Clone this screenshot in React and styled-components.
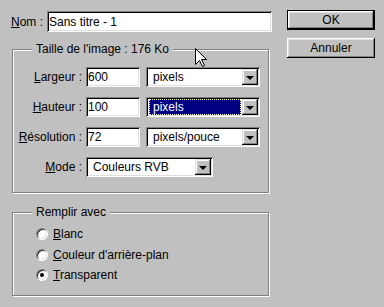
import React from "react";
import styled, { createGlobalStyle } from "styled-components";

const GlobalStyle = createGlobalStyle`
  html, body { margin: 0; padding: 0; background: #c0c0c0; }
  body {
    font-family: "Liberation Sans", Arial, sans-serif;
    font-size: 12px;
    color: #000;
  }
`;

const Dialog = styled.div`
  position: relative;
  width: 384px;
  height: 307px;
  box-sizing: border-box;
  padding: 10px 0 0 11px;
  display: flex;
  align-items: flex-start;
  background: #c0c0c0;
  overflow: hidden;
`;

const LeftCol = styled.div`
  width: 261px;
  display: flex;
  flex-direction: column;
`;

const NameRow = styled.div`
  display: flex;
  align-items: center;
  margin-top: 1px;
  height: 21px;
`;

const NameLabel = styled.span`
  width: 36px;
  flex: none;
`;

const Field = styled.div`
  box-sizing: border-box;
  width: ${(p) => p.$w}px;
  height: ${(p) => p.$h || 20}px;
  background: #fff;
  display: flex;
  align-items: center;
  padding-left: 2px;
  white-space: nowrap;
  box-shadow: inset 1px 1px 0 #808080, inset -1px -1px 0 #fff,
    inset 2px 2px 0 #000, inset -2px -2px 0 #dfdfdf;
`;

const GroupBox = styled.div`
  position: relative;
  box-sizing: border-box;
  margin-top: ${(p) => p.$mt}px;
  margin-left: 1px;
  width: 257px;
  height: ${(p) => p.$h}px;
  border: 1px solid #808080;
  box-shadow: inset 1px 1px 0 #fff, 1px 1px 0 #fff;
`;

const GroupTitle = styled.span`
  position: absolute;
  top: -8px;
  left: 19px;
  padding: 0 4px;
  line-height: 14px;
  background: #c0c0c0;
`;

const FormGrid = styled.div`
  display: grid;
  grid-template-columns: 73px 60px 114px;
  grid-auto-rows: 20px;
  row-gap: 10px;
  padding-top: 17px;
`;

const RowLabel = styled.span`
  grid-column: 1;
  padding-right: 4px;
  display: flex;
  align-items: center;
  justify-content: flex-end;
  white-space: nowrap;
`;

const Key = styled.u`
  text-decoration: underline;
  text-underline-offset: 1px;
`;

const ComboBox = styled.div`
  box-sizing: border-box;
  grid-column: ${(p) => p.$col};
  width: ${(p) => p.$w}px;
  height: 20px;
  padding: 2px;
  display: flex;
  background: #fff;
  box-shadow: inset 1px 1px 0 #808080, inset -1px -1px 0 #fff,
    inset 2px 2px 0 #000, inset -2px -2px 0 #dfdfdf;
`;

const ComboText = styled.div`
  flex: 1;
  margin: 0 1px;
  padding-left: 4px;
  display: flex;
  align-items: center;
  white-space: nowrap;
  background: ${(p) => (p.$selected ? "#000080" : "transparent")};
  color: ${(p) => (p.$selected ? "#fff" : "#000")};
  outline: ${(p) => (p.$selected ? "1px dotted #ffffc0" : "none")};
  outline-offset: -1px;
`;

const DropButton = styled.div`
  flex: none;
  width: 16px;
  height: 16px;
  box-sizing: border-box;
  background: #c0c0c0;
  display: flex;
  align-items: center;
  justify-content: center;
  box-shadow: inset -1px -1px 0 #000, inset 1px 1px 0 #dfdfdf,
    inset -2px -2px 0 #808080, inset 2px 2px 0 #fff;

  &::after {
    content: "";
    width: 0;
    height: 0;
    margin-top: 1px;
    border-left: 4px solid transparent;
    border-right: 4px solid transparent;
    border-top: 4px solid #000;
  }
`;

const GridField = styled(Field)`
  grid-column: 2;
`;

const RadioList = styled.div`
  display: flex;
  flex-direction: column;
  padding: 11px 0 0 23px;
`;

const RadioRow = styled.div`
  height: 20.5px;
  display: flex;
  align-items: center;
  gap: 5px;
`;

const RadioDot = styled.span`
  position: relative;
  width: 12px;
  height: 12px;
  box-sizing: border-box;
  border-radius: 50%;
  background: #fff;
  border: 1px solid;
  border-color: #808080 #fff #fff #808080;
  box-shadow: inset 1px 1px 0 #202020, inset -1px -1px 0 #dfdfdf;

  &::after {
    content: "";
    display: ${(p) => (p.$checked ? "block" : "none")};
    position: absolute;
    left: 3px;
    top: 3px;
    width: 4px;
    height: 4px;
    border-radius: 50%;
    background: #000;
  }
`;

const RightCol = styled.div`
  margin-left: 15px;
  width: 88px;
  display: flex;
  flex-direction: column;
  gap: 8px;
`;

const Button = styled.div`
  box-sizing: border-box;
  height: 20px;
  display: flex;
  align-items: center;
  justify-content: center;
  background: #c0c0c0;
  border: ${(p) => (p.$default ? "1px solid #000" : "none")};
  box-shadow: inset -1px -1px 0 #000, inset 1px 1px 0 #fff,
    inset -2px -2px 0 #808080, inset 2px 2px 0 #dfdfdf;
`;

const Cursor = styled.svg`
  position: absolute;
  left: 195px;
  top: 48px;
  width: 13px;
  height: 20px;
`;

export default function App() {
  return (
    <>
      <GlobalStyle />
      <Dialog>
        <LeftCol>
          <NameRow>
            <NameLabel>
              <Key>N</Key>om :
            </NameLabel>
            <Field $w={225} $h={21}>Sans titre - 1</Field>
          </NameRow>

          <GroupBox $mt={17} $h={144}>
            <GroupTitle>Taille de l'image : 176 Ko</GroupTitle>
            <FormGrid>
              <RowLabel>
                <Key>L</Key>argeur :
              </RowLabel>
              <GridField $w={54}>600</GridField>
              <ComboBox $col={3} $w={114}>
                <ComboText>pixels</ComboText>
                <DropButton />
              </ComboBox>

              <RowLabel>
                <Key>H</Key>auteur :
              </RowLabel>
              <GridField $w={54}>100</GridField>
              <ComboBox $col={3} $w={114}>
                <ComboText $selected>pixels</ComboText>
                <DropButton />
              </ComboBox>

              <RowLabel>
                <Key>R</Key>ésolution :
              </RowLabel>
              <GridField $w={54}>72</GridField>
              <ComboBox $col={3} $w={114}>
                <ComboText>pixels/pouce</ComboText>
                <DropButton />
              </ComboBox>

              <RowLabel>
                <Key>M</Key>ode :
              </RowLabel>
              <ComboBox $col="2 / span 2" $w={127}>
                <ComboText>Couleurs RVB</ComboText>
                <DropButton />
              </ComboBox>
            </FormGrid>
          </GroupBox>

          <GroupBox $mt={19} $h={84}>
            <GroupTitle>Remplir avec</GroupTitle>
            <RadioList>
              <RadioRow>
                <RadioDot />
                <span>
                  <Key>B</Key>lanc
                </span>
              </RadioRow>
              <RadioRow>
                <RadioDot />
                <span>
                  <Key>C</Key>ouleur d'arrière-plan
                </span>
              </RadioRow>
              <RadioRow>
                <RadioDot $checked />
                <span>
                  <Key>T</Key>ransparent
                </span>
              </RadioRow>
            </RadioList>
          </GroupBox>
        </LeftCol>

        <RightCol>
          <Button $default>OK</Button>
          <Button>Annuler</Button>
        </RightCol>

        <Cursor viewBox="0 0 13 20">
          <path
            d="M0.5 0.5 L0.5 16.5 L4.5 12.5 L7.5 18.5 L9.5 17.5 L6.5 11.5 L11.5 11.5 Z"
            fill="#fff"
            stroke="#000"
            strokeWidth="1"
          />
        </Cursor>
      </Dialog>
    </>
  );
}
